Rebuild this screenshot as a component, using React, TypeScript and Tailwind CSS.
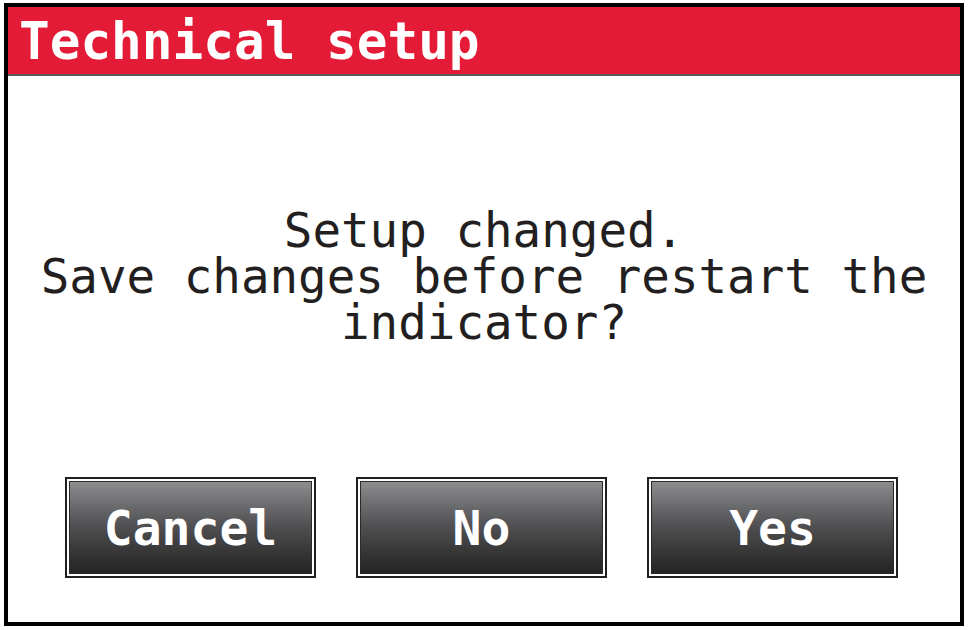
import React from "react";

const mono = { fontFamily: '"DejaVu Sans Mono", "Liberation Mono", monospace' };

function Btn({ label }: { label: string }) {
  return (
    <div className="w-[251px] h-[101px] border-2 border-[#231f20] bg-white p-[2px]">
      <div className="w-full h-full border border-[#2a2a2a] bg-gradient-to-b from-[#8c8d8f] via-[#4e4e50] to-[#242424] flex items-center justify-center">
        <span className="text-white text-[48px] font-bold leading-none" style={mono}>
          {label}
        </span>
      </div>
    </div>
  );
}

export default function App() {
  return (
    <div className="w-[968px] h-[630px] bg-white pt-[3px] pl-[4px]">
      <div className="w-[960px] h-[623px] border-4 border-black flex flex-col bg-white">
        <div className="h-[69px] bg-[#e41b37] border-b-2 border-[#5a5a5a] flex items-center pl-[11px] pt-[1px]">
          <span className="text-white text-[51px] font-bold leading-none" style={mono}>
            Technical setup
          </span>
        </div>
        <div className="flex-1 flex items-center justify-center">
          <p className="text-[#231f20] text-[47.5px] leading-[46px] text-center whitespace-pre" style={mono}>
            {"Setup changed.\nSave changes before restart the\nindicator?"}
          </p>
        </div>
        <div className="flex justify-start gap-[40px] pl-[57px] mb-[44px]">
          <Btn label="Cancel" />
          <Btn label="No" />
          <Btn label="Yes" />
        </div>
      </div>
    </div>
  );
}
